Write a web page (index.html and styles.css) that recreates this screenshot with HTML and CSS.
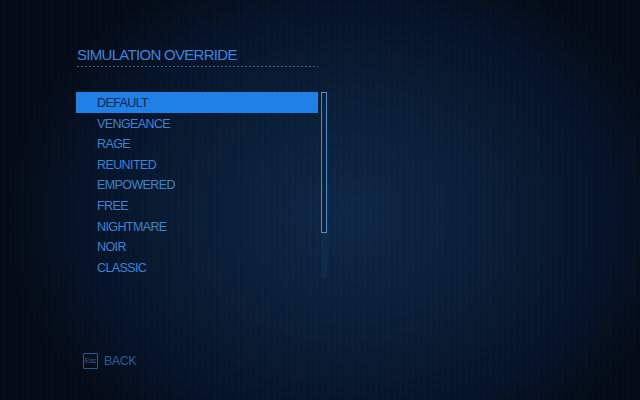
FILE: index.html
```html
<!DOCTYPE html>
<html lang="en">
<head>
    <meta charset="UTF-8">
    <title>Simulation Override</title>
    <link rel="stylesheet" href="styles.css">
</head>
<body>
    <div class="screen">
        <div class="panel">
            <h1 class="panel-title">SIMULATION OVERRIDE</h1>

            <div class="list-wrap">
                <ul class="option-list">
                    <li class="option selected">DEFAULT</li>
                    <li class="option">VENGEANCE</li>
                    <li class="option">RAGE</li>
                    <li class="option">REUNITED</li>
                    <li class="option">EMPOWERED</li>
                    <li class="option">FREE</li>
                    <li class="option">NIGHTMARE</li>
                    <li class="option">NOIR</li>
                    <li class="option">CLASSIC</li>
                </ul>
                <div class="scroll-track">
                    <div class="scroll-thumb"></div>
                </div>
            </div>
        </div>

        <div class="footer">
            <span class="key">Esc</span>
            <span class="key-label">BACK</span>
        </div>
    </div>
</body>
</html>
```

FILE: styles.css
```css
* {
    margin: 0;
    padding: 0;
    box-sizing: border-box;
    font-family: 'Liberation Sans', Arial, sans-serif;
}

html, body {
    width: 640px;
    height: 400px;
    overflow: hidden;
}

body {
    background-color: #050c18;
    background-image:
        repeating-linear-gradient(90deg, rgba(0, 0, 0, 0.03) 0 3px, rgba(255, 255, 255, 0.005) 3px 6px),
        radial-gradient(ellipse 340px 270px at 345px 215px, #0d2847 0%, #0a1f38 40%, #06142a 75%, #040b17 100%);
}

.screen {
    display: flex;
    flex-direction: column;
    justify-content: space-between;
    height: 400px;
    padding: 47px 0 31px 76px;
}

.panel {
    width: 252px;
}

.panel-title {
    width: 242px;
    padding: 0 0 4px 1px;
    font-size: 15px;
    font-weight: normal;
    letter-spacing: -0.7px;
    line-height: 16px;
    color: #3b86de;
    /* dotted rule under the heading */
    background: repeating-linear-gradient(90deg, #3f6690 0 2px, transparent 2px 4px) bottom left / 241px 1px no-repeat;
    background-position: 1px 100%;
}

.list-wrap {
    display: flex;
    gap: 3px;
    margin-top: 25px;
}

.option-list {
    list-style: none;
    width: 242px;
}

.option {
    height: 20.6px;
    line-height: 21px;
    padding: 1px 0 0 21px;
    font-size: 12.5px;
    letter-spacing: -0.6px;
    color: #3b84d6;
}

.option.selected {
    background-color: #1f80e6;
    color: #0b2650;
}

.scroll-track {
    width: 6px;
    height: 186px;
    background-color: #0f2a4a;
}

.scroll-thumb {
    height: 141px;
    border: 1px solid #4a8cd2;
    background-color: #0c213c;
}

.footer {
    display: flex;
    align-items: center;
    gap: 6px;
    padding-left: 7px;
}

.key {
    width: 15px;
    height: 16px;
    border: 1px solid #2a5a92;
    border-radius: 1px;
    font-size: 7.5px;
    line-height: 14px;
    letter-spacing: -0.3px;
    text-align: center;
    color: #2d5e98;
}

.key-label {
    font-size: 12.5px;
    letter-spacing: -0.5px;
    color: #2b5d98;
}
```
